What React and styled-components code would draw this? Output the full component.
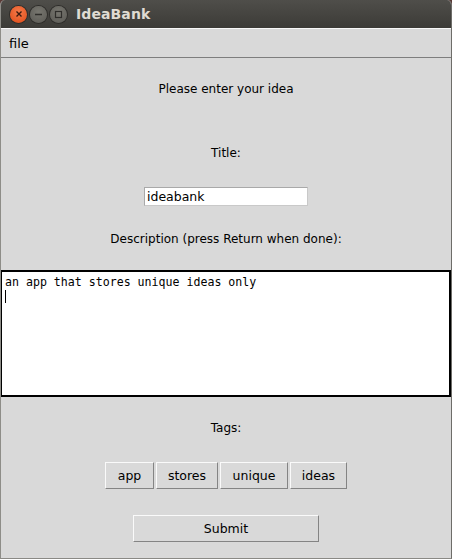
import React from 'react'
import styled, { createGlobalStyle } from 'styled-components'

const GlobalStyle = createGlobalStyle`
  html, body {
    margin: 0;
    padding: 0;
    background: #5a3a36;
  }
  #root {
    width: 452px;
    height: 559px;
  }
`

const Window = styled.div`
  width: 452px;
  height: 559px;
  display: flex;
  flex-direction: column;
  background: #d9d9d9;
  border-radius: 5px 5px 0 0;
  overflow: hidden;
  box-sizing: border-box;
  border-left: 1px solid #8e8d88;
  border-right: 1px solid #6e6d69;
  border-bottom: 1px solid #8a8985;
  font-family: 'DejaVu Sans', sans-serif;
  font-size: 12px;
  color: #000;
`

const TitleBar = styled.div`
  height: 28px;
  flex: none;
  display: flex;
  align-items: center;
  padding-left: 10px;
  background: linear-gradient(#4f4e4a, #3c3b37);
  margin: 0 -1px;
`

const WinButton = styled.div`
  width: 17px;
  height: 17px;
  border-radius: 50%;
  margin-right: 3px;
  display: flex;
  align-items: center;
  justify-content: center;
  background: ${p => (p.$close ? 'radial-gradient(circle at 50% 35%, #f47a4a, #df4a16)' : 'radial-gradient(circle at 50% 35%, #77766f, #5a5954)')};
  box-shadow: 0 0 0 1px #2e2d2a;
`

const Title = styled.div`
  margin-left: 6px;
  color: #dfdbd2;
  font-weight: bold;
  font-size: 14px;
  letter-spacing: 0.1px;
`

const MenuBar = styled.div`
  flex: none;
  display: flex;
  align-items: center;
  padding-left: 8px;
  border-top: 1px solid #f7f7f7;
  border-bottom: 1px solid #7e7e7e;
  box-sizing: border-box;
  height: 30px;
  font-size: 13px;
`

const Body = styled.div`
  flex: 1;
  display: flex;
  flex-direction: column;
  align-items: center;
`

const Label = styled.div`
  height: 20px;
  line-height: 20px;
  margin-top: ${p => p.$gap}px;
`

const Entry = styled.div`
  width: 164px;
  height: 19px;
  box-sizing: border-box;
  margin-top: ${p => p.$gap}px;
  background: #fff;
  border: 1px solid #c9c9c9;
  border-top-color: #a9a9a9;
  border-left-color: #a9a9a9;
  padding-left: 2px;
  line-height: 17px;
  font-size: 12.5px;
`

const TextArea = styled.div`
  align-self: stretch;
  height: 127px;
  margin-top: ${p => p.$gap}px;
  box-sizing: border-box;
  background: #fff;
  border: 2px solid #000;
  border-left-width: 1px;
  padding: 3px 3px;
  font-family: 'DejaVu Sans Mono', monospace;
  font-size: 11.6px;
  line-height: 14px;
`

const Caret = styled.span`
  display: inline-block;
  width: 1px;
  height: 13px;
  background: #000;
  vertical-align: top;
  margin-top: 1px;
`

const ButtonRow = styled.div`
  display: flex;
  gap: 2px;
  margin-top: ${p => p.$gap}px;
`

const TkButton = styled.div`
  width: ${p => p.$w}px;
  height: 27px;
  box-sizing: border-box;
  display: flex;
  align-items: center;
  justify-content: center;
  background: #d9d9d9;
  border: 1px solid #848484;
  border-top-color: #fafafa;
  border-left-color: #fafafa;
  font-size: 12.5px;
  margin-top: ${p => p.$gap || 0}px;
`

const tags = [
  ['app', 49],
  ['stores', 62],
  ['unique', 68],
  ['ideas', 57],
]

export default function App() {
  return (
    <>
      <GlobalStyle />
      <Window>
        <TitleBar>
          <WinButton $close>
            <svg width="8" height="8" viewBox="0 0 8 8">
              <path d="M1.5 1.5 L6.5 6.5 M6.5 1.5 L1.5 6.5" stroke="#3a1a0e" strokeWidth="1.4" />
            </svg>
          </WinButton>
          <WinButton>
            <svg width="9" height="9" viewBox="0 0 9 9">
              <path d="M1 4.5 H8" stroke="#2f2e2b" strokeWidth="1.4" />
            </svg>
          </WinButton>
          <WinButton>
            <svg width="9" height="9" viewBox="0 0 9 9">
              <rect x="1.5" y="1.5" width="6" height="6" fill="none" stroke="#2f2e2b" strokeWidth="1.2" />
            </svg>
          </WinButton>
          <Title>IdeaBank</Title>
        </TitleBar>
        <MenuBar>file</MenuBar>
        <Body>
          <Label $gap={21}>Please enter your idea</Label>
          <Label $gap={44}>Title:</Label>
          <Entry $gap={24}>ideabank</Entry>
          <Label $gap={23}>Description (press Return when done):</Label>
          <TextArea $gap={21}>
            an app that stores unique ideas only
            <br />
            <Caret />
          </TextArea>
          <Label $gap={21}>Tags:</Label>
          <ButtonRow $gap={24}>
            {tags.map(([t, w]) => (
              <TkButton key={t} $w={w}>{t}</TkButton>
            ))}
          </ButtonRow>
          <TkButton $w={186} $gap={26}>Submit</TkButton>
        </Body>
      </Window>
    </>
  )
}
